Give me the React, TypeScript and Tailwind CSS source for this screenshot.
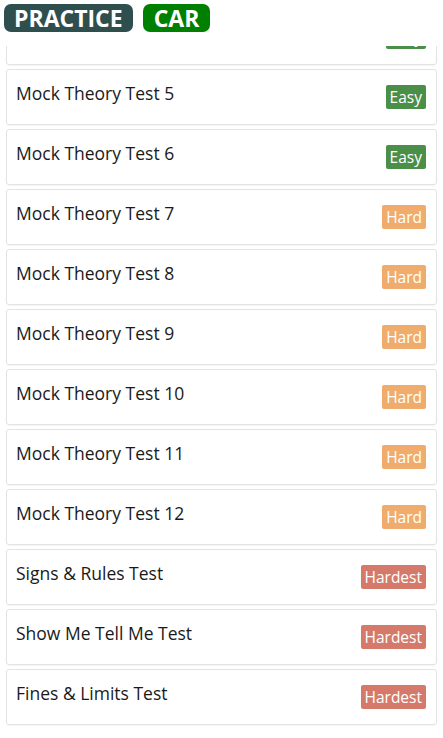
import React from "react";

type Level = "Easy" | "Hard" | "Hardest";

const items: { name: string; level: Level }[] = [
  { name: "Mock Theory Test 4", level: "Easy" },
  { name: "Mock Theory Test 5", level: "Easy" },
  { name: "Mock Theory Test 6", level: "Easy" },
  { name: "Mock Theory Test 7", level: "Hard" },
  { name: "Mock Theory Test 8", level: "Hard" },
  { name: "Mock Theory Test 9", level: "Hard" },
  { name: "Mock Theory Test 10", level: "Hard" },
  { name: "Mock Theory Test 11", level: "Hard" },
  { name: "Mock Theory Test 12", level: "Hard" },
  { name: "Signs & Rules Test", level: "Hardest" },
  { name: "Show Me Tell Me Test", level: "Hardest" },
  { name: "Fines & Limits Test", level: "Hardest" },
];

const badgeClass: Record<Level, string> = {
  Easy: "bg-[#4a8e48]",
  Hard: "bg-[#f0ac6c]",
  Hardest: "bg-[#d57a6b]",
};

export default function App() {
  return (
    <div
      className="w-[443px] h-[738px] overflow-hidden bg-white flex flex-col"
      style={{ fontFamily: '"Open Sans", "Noto Sans", sans-serif' }}
    >
      <header className="h-[46px] shrink-0 flex items-start gap-[10px] pl-[4px] pt-[4px] bg-white relative z-10">
        <span className="h-[28px] px-[10px] rounded-[7px] bg-[#2f4f4f] text-white font-bold text-[23px] leading-[28px]">
          PRACTICE
        </span>
        <span className="h-[28px] px-[11px] rounded-[7px] bg-[#008000] text-white font-bold text-[23px] leading-[28px]">
          CAR
        </span>
      </header>
      <div className="flex-1 overflow-hidden">
        <div className="flex flex-col gap-[4px] pl-[6px] pr-[6px] -mt-[37px]">
          {items.map((it) => (
            <div
              key={it.name}
              className="h-[56px] shrink-0 flex items-center justify-between border border-[#e3e3e3] rounded-[3px] pl-[9px] pr-[10px] shadow-[0_1px_1px_rgba(0,0,0,0.04)]"
            >
              <span className="text-[17.5px] text-[#1a1a1a] leading-none mb-[6px]">{it.name}</span>
              <span
                className={`h-[24px] px-[4px] rounded-[2px] text-white text-[15.5px] leading-[24px] ${badgeClass[it.level]}`}
              >
                {it.level}
              </span>
            </div>
          ))}
        </div>
      </div>
    </div>
  );
}
